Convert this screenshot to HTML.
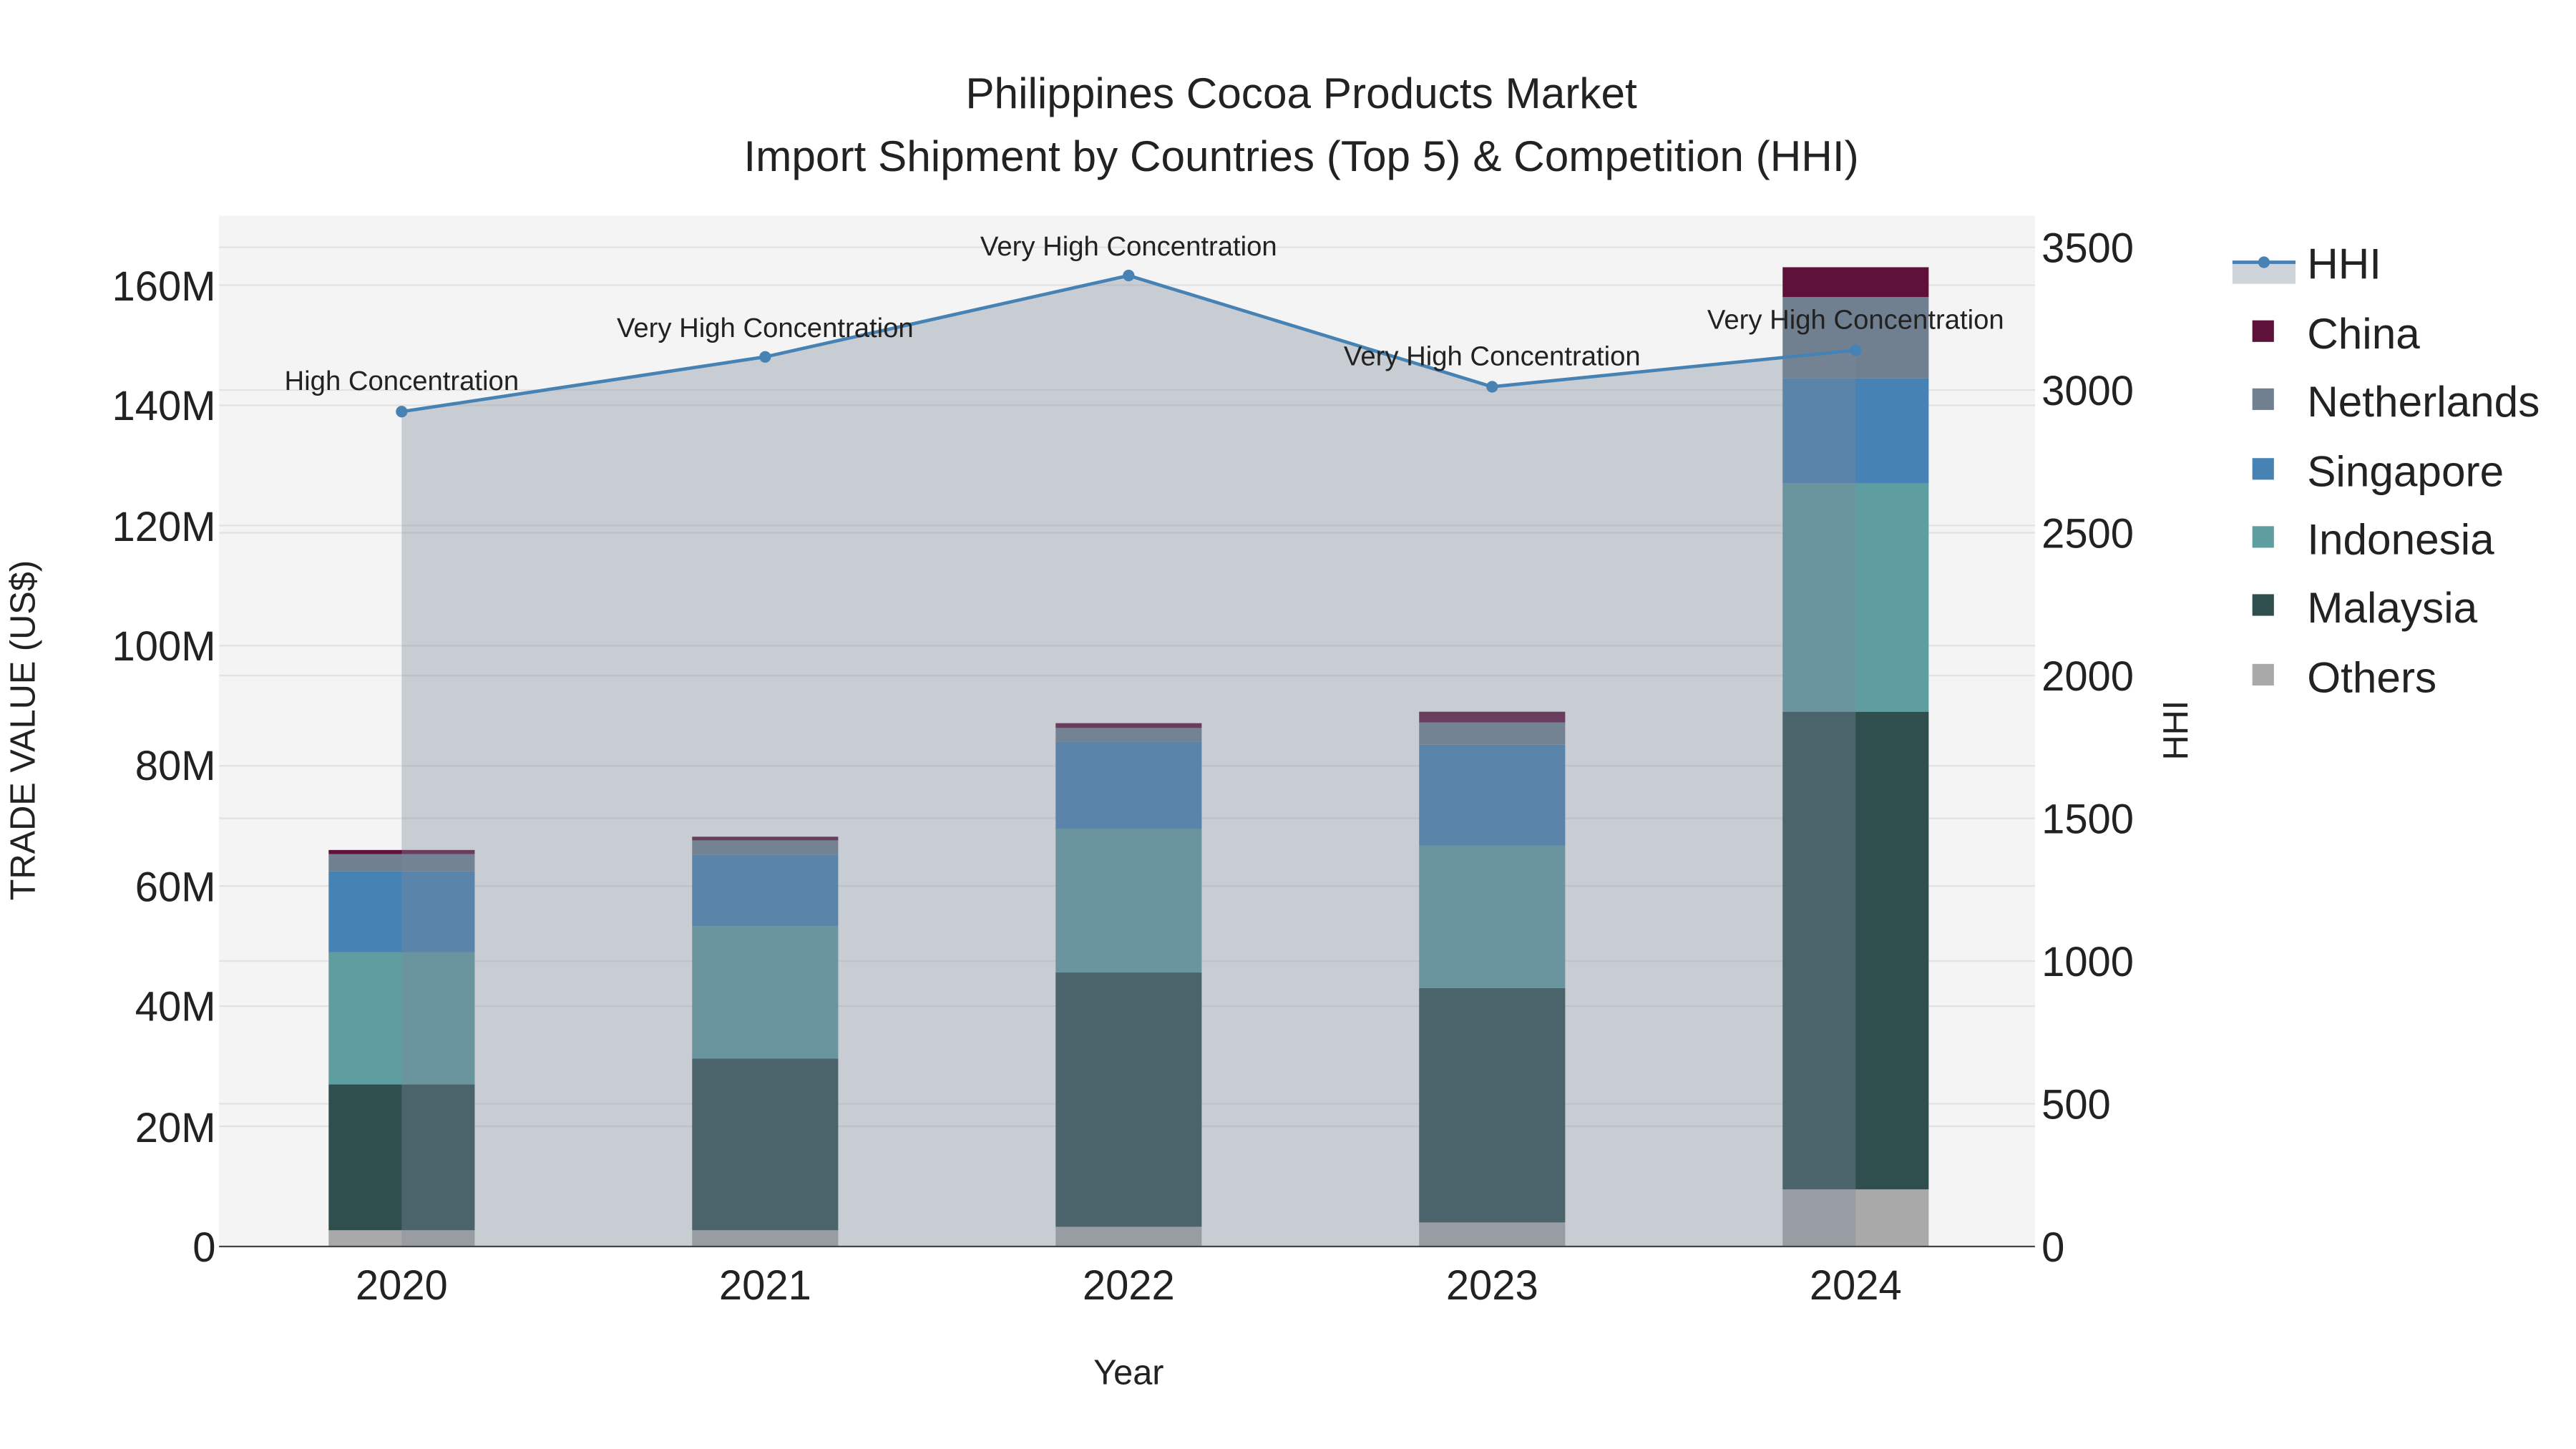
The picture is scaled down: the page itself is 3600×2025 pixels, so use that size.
<!DOCTYPE html>
<html><head><meta charset="utf-8"><style>html,body{margin:0;padding:0;background:#fff}svg{display:block}text{font-family:"Liberation Sans",sans-serif;fill:#222}</style></head><body>
<svg width="3600" height="2025" viewBox="0 0 1552 873" xmlns="http://www.w3.org/2000/svg">
<rect x="0" y="0" width="1552" height="873" fill="#fff"/>
<rect x="132" y="130" width="1094" height="621" fill="#f4f4f4"/>
<g stroke="#e2e2e2" stroke-width="1">
<line x1="132" x2="1226" y1="678.6" y2="678.6"/><line x1="132" x2="1226" y1="606.2" y2="606.2"/><line x1="132" x2="1226" y1="533.8" y2="533.8"/><line x1="132" x2="1226" y1="461.4" y2="461.4"/><line x1="132" x2="1226" y1="389" y2="389"/><line x1="132" x2="1226" y1="316.6" y2="316.6"/><line x1="132" x2="1226" y1="244.2" y2="244.2"/><line x1="132" x2="1226" y1="171.8" y2="171.8"/>
<line x1="132" x2="1226" y1="665" y2="665"/><line x1="132" x2="1226" y1="579" y2="579"/><line x1="132" x2="1226" y1="493" y2="493"/><line x1="132" x2="1226" y1="407" y2="407"/><line x1="132" x2="1226" y1="321" y2="321"/><line x1="132" x2="1226" y1="235" y2="235"/><line x1="132" x2="1226" y1="149" y2="149"/>
</g>
<!-- bars -->
<g>
<!-- 2020 -->
<rect x="198" y="741.2" width="88" height="9.8" fill="#a9a9a9"/>
<rect x="198" y="653.3" width="88" height="87.9" fill="#2f4f4f"/>
<rect x="198" y="573.6" width="88" height="79.7" fill="#5f9ea0"/>
<rect x="198" y="524.8" width="88" height="48.8" fill="#4682b4"/>
<rect x="198" y="514.6" width="88" height="10.2" fill="#708090"/>
<rect x="198" y="512.1" width="88" height="2.5" fill="#5e1239"/>
<!-- 2021 -->
<rect x="417" y="741.2" width="88" height="9.8" fill="#a9a9a9"/>
<rect x="417" y="637.7" width="88" height="103.5" fill="#2f4f4f"/>
<rect x="417" y="558" width="88" height="79.7" fill="#5f9ea0"/>
<rect x="417" y="515" width="88" height="43" fill="#4682b4"/>
<rect x="417" y="506.3" width="88" height="8.7" fill="#708090"/>
<rect x="417" y="504.1" width="88" height="2.2" fill="#5e1239"/>
<!-- 2022 -->
<rect x="636" y="739.1" width="88" height="11.9" fill="#a9a9a9"/>
<rect x="636" y="585.9" width="88" height="153.2" fill="#2f4f4f"/>
<rect x="636" y="499.4" width="88" height="86.5" fill="#5f9ea0"/>
<rect x="636" y="446.9" width="88" height="52.5" fill="#4682b4"/>
<rect x="636" y="438.6" width="88" height="8.3" fill="#708090"/>
<rect x="636" y="435.7" width="88" height="2.9" fill="#5e1239"/>
<!-- 2023 -->
<rect x="855" y="736.5" width="88" height="14.5" fill="#a9a9a9"/>
<rect x="855" y="595.3" width="88" height="141.2" fill="#2f4f4f"/>
<rect x="855" y="509.5" width="88" height="85.8" fill="#5f9ea0"/>
<rect x="855" y="448.7" width="88" height="60.8" fill="#4682b4"/>
<rect x="855" y="435.3" width="88" height="13.4" fill="#708090"/>
<rect x="855" y="428.8" width="88" height="6.5" fill="#5e1239"/>
<!-- 2024 -->
<rect x="1074" y="716.6" width="88" height="34.4" fill="#a9a9a9"/>
<rect x="1074" y="428.8" width="88" height="287.8" fill="#2f4f4f"/>
<rect x="1074" y="291.3" width="88" height="137.5" fill="#5f9ea0"/>
<rect x="1074" y="227.9" width="88" height="63.4" fill="#4682b4"/>
<rect x="1074" y="179" width="88" height="48.9" fill="#708090"/>
<rect x="1074" y="161" width="88" height="18" fill="#5e1239"/>
</g>
<!-- HHI area -->
<polygon points="242,751 242,248 461,215 680,166 899,233 1118,211 1118,751" fill="rgb(124,135,154)" fill-opacity="0.37"/>
<polyline points="242,248 461,215 680,166 899,233 1118,211" fill="none" stroke="#4682b4" stroke-width="2"/>
<g fill="#4682b4"><circle cx="242" cy="248" r="3.5"/><circle cx="461" cy="215" r="3.5"/><circle cx="680" cy="166" r="3.5"/><circle cx="899" cy="233" r="3.5"/><circle cx="1118" cy="211" r="3.5"/></g>
<line x1="132" x2="1226" y1="751" y2="751" stroke="#444" stroke-width="1"/>
<g font-size="16.5" text-anchor="middle">
<text x="242" y="235">High Concentration</text>
<text x="461" y="203">Very High Concentration</text>
<text x="680" y="154">Very High Concentration</text>
<text x="899" y="220">Very High Concentration</text>
<text x="1118" y="198">Very High Concentration</text>
</g>
<!-- titles -->
<g text-anchor="middle" font-size="26">
<text x="784" y="65">Philippines Cocoa Products Market</text>
<text x="784" y="103">Import Shipment by Countries (Top 5) &amp; Competition (HHI)</text>
</g>
<!-- left ticks -->
<g font-size="25" text-anchor="end">
<text x="130" y="760">0</text><text x="130" y="688">20M</text><text x="130" y="615">40M</text><text x="130" y="543">60M</text><text x="130" y="470">80M</text><text x="130" y="398">100M</text><text x="130" y="326">120M</text><text x="130" y="253">140M</text><text x="130" y="181">160M</text>
</g>
<g font-size="25" text-anchor="start">
<text x="1230" y="760">0</text><text x="1230" y="674">500</text><text x="1230" y="588">1000</text><text x="1230" y="502">1500</text><text x="1230" y="416">2000</text><text x="1230" y="330">2500</text><text x="1230" y="244">3000</text><text x="1230" y="158">3500</text>
</g>
<g font-size="25" text-anchor="middle">
<text x="242" y="783">2020</text><text x="461" y="783">2021</text><text x="680" y="783">2022</text><text x="899" y="783">2023</text><text x="1118" y="783">2024</text>
</g>
<text x="680" y="834" font-size="21" text-anchor="middle">Year</text>
<text transform="translate(21,440) rotate(-90)" font-size="21" text-anchor="middle">TRADE VALUE (US$)</text>
<text transform="translate(1318,440) rotate(-90)" font-size="21" text-anchor="middle">HHI</text>
<!-- legend -->
<rect x="1345" y="158" width="38" height="13" fill="rgb(124,135,154)" fill-opacity="0.37"/>
<line x1="1345" x2="1383" y1="158" y2="158" stroke="#4682b4" stroke-width="2"/>
<circle cx="1364" cy="158" r="3.5" fill="#4682b4"/>
<g font-size="26">
<text x="1390" y="168">HHI</text>
<text x="1390" y="210">China</text>
<text x="1390" y="251">Netherlands</text>
<text x="1390" y="293">Singapore</text>
<text x="1390" y="334">Indonesia</text>
<text x="1390" y="375">Malaysia</text>
<text x="1390" y="417">Others</text>
</g>
<rect x="1357" y="193" width="13" height="13" fill="#5e1239"/>
<rect x="1357" y="234" width="13" height="13" fill="#708090"/>
<rect x="1357" y="276" width="13" height="13" fill="#4682b4"/>
<rect x="1357" y="317" width="13" height="13" fill="#5f9ea0"/>
<rect x="1357" y="358" width="13" height="13" fill="#2f4f4f"/>
<rect x="1357" y="400" width="13" height="13" fill="#a9a9a9"/>
</svg>
</body></html>
